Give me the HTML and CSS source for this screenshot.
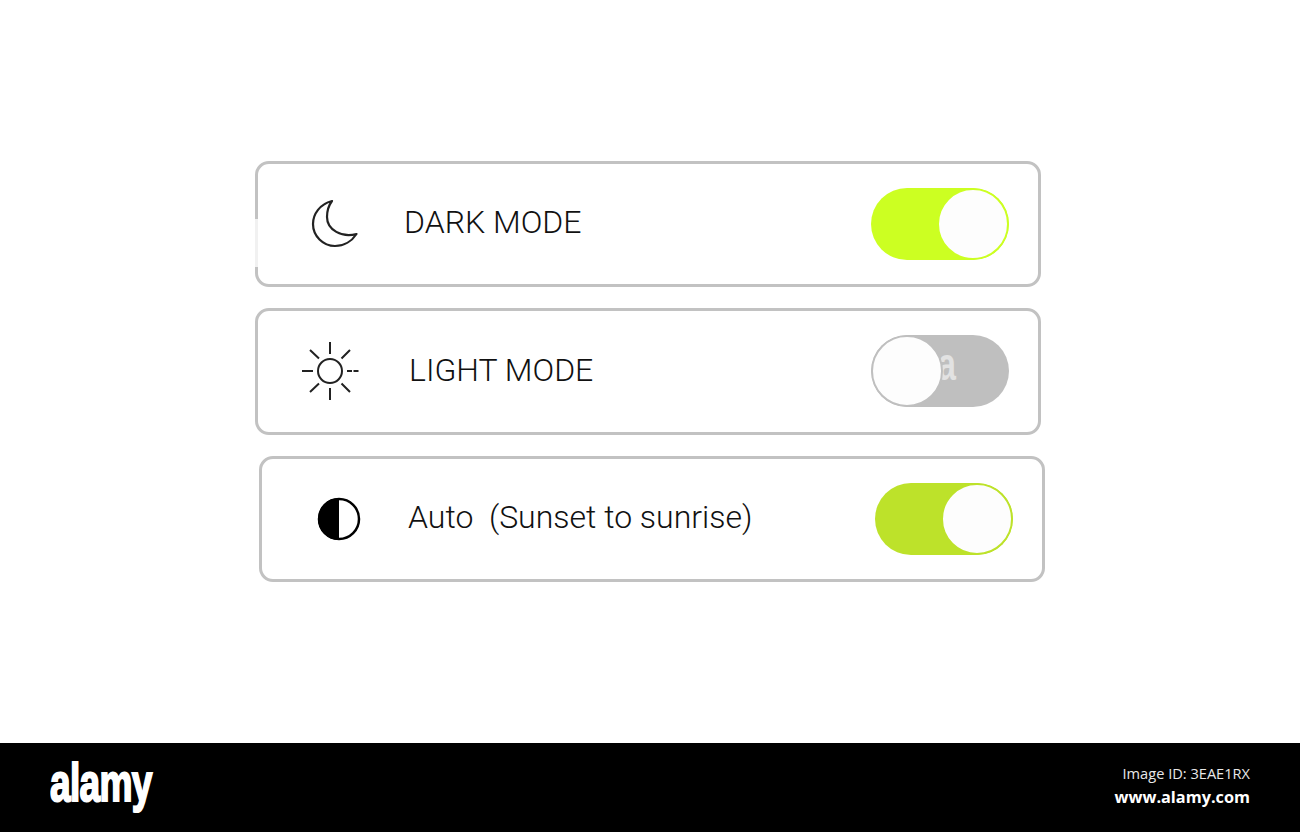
FILE: index.html
```html
<!DOCTYPE html>
<html lang="en">
    <head>
        <meta charset="utf-8">
        <title>Display mode settings</title>
        <link rel="stylesheet" href="styles.css">
    </head>
    <body>
        <div class="stage">
            <div class="card card-dark">
                <div class="icon-cell icon-moon">
                    <svg width="48" height="50" viewBox="0 0 48 50">
                        <path d="M21 2C9 5 2 15 2 25C2 37 12 47 24 47C33 47 41 42 45.5 35C31 39 16 31 16 18C16 11 18 6 21 2Z" fill="none" stroke="#222" stroke-width="2.2" stroke-linejoin="round"/>
                    </svg>
                </div>
                <span class="label">DARK MODE</span>
                <div class="toggle on"><span class="knob"></span></div>
            </div>

            <div class="card card-light">
                <div class="icon-cell icon-sun">
                    <svg width="60" height="60" viewBox="0 0 60 60">
                        <circle cx="30" cy="30" r="12" fill="none" stroke="#222" stroke-width="2"/>
                        <path d="M30 1V13M30 47V59M2 30H13M10 9L19 17.5M50 9L41.5 17.5M10 51L19 42.5M50 51L41.5 42.5" stroke="#222" stroke-width="2" fill="none"/>
                        <path d="M47 30H59" stroke="#222" stroke-width="2" stroke-dasharray="5 1.5" fill="none"/>
                    </svg>
                </div>
                <span class="label">LIGHT MODE</span>
                <div class="toggle off"><span class="mark">a</span><span class="knob"></span></div>
            </div>

            <div class="card card-auto">
                <div class="icon-cell icon-half">
                    <svg width="44" height="44" viewBox="0 0 44 44">
                        <path d="M22 1A21 21 0 0 0 22 43Z" fill="#000"/>
                        <circle cx="22" cy="22" r="20" fill="none" stroke="#000" stroke-width="2.5"/>
                    </svg>
                </div>
                <span class="label">Auto&nbsp; (Sunset to sunrise)</span>
                <div class="toggle on olive"><span class="knob"></span></div>
            </div>
        </div>

        <div class="footer">
            <span class="logo">alamy</span>
            <div class="stock">
                <div class="image-id">Image ID: 3EAE1RX</div>
                <div class="site">www.alamy.com</div>
            </div>
        </div>
    </body>
</html>
```

FILE: styles.css
```css
* {
    margin: 0;
    padding: 0;
    box-sizing: border-box;
}

body {
    width: 1300px;
    height: 832px;
    overflow: hidden;
    background: #fff;
    font-family: Roboto, "Liberation Sans", sans-serif;
    color: #111;
}

.stage {
    height: 743px;
    padding: 161px 0 0 255px;
    display: flex;
    flex-direction: column;
    gap: 21px;
}

.card {
    position: relative;
    width: 786px;
    height: 126px;
    display: flex;
    align-items: center;
    padding-right: 29px;
    border: 3px solid #c2c2c2;
    border-radius: 14px;
}

/* the scan loses part of this edge */
.card-dark::before {
    content: "";
    position: absolute;
    left: -3px;
    top: 55px;
    width: 3px;
    height: 48px;
    background: #f1f1f1;
}

.card-light {
    height: 127px;
    padding-bottom: 1px;
}

.card-auto {
    margin-left: 4px;
}

.icon-cell {
    display: flex;
    align-items: center;
    width: 146px;
}

.icon-cell svg {
    display: block;
}

.icon-moon {
    padding-left: 53px;
}

.icon-sun {
    width: 151px;
    padding-left: 42px;
}

.icon-half {
    padding-left: 55px;
}

.label {
    flex: 1;
    margin-top: -3px;
    font-size: 32px;
    font-weight: 300;
    white-space: nowrap;
}

.card-dark .label,
.card-auto .label {
    margin-top: -5px;
}

.toggle {
    position: relative;
    display: flex;
    width: 138px;
    height: 72px;
    border-radius: 36px;
    overflow: hidden;
}

.knob {
    width: 72px;
    height: 72px;
    border-radius: 50%;
    background: #fdfdfd;
    border: 2px solid;
    position: relative;
}

.on {
    justify-content: flex-end;
    background: #ccff22;
}

.on .knob {
    border-color: #ccff22;
}

.olive {
    background: #bde22a;
}

.olive .knob {
    border-color: #bde22a;
}

.off {
    background: #bfbfbf;
}

.off .knob {
    border-color: #bfbfbf;
}

.mark {
    position: absolute;
    left: 67px;
    top: 1px;
    font-family: "Liberation Sans", sans-serif;
    font-weight: 700;
    font-size: 46px;
    line-height: 56px;
    color: #e2e2e2;
    transform: scaleX(.7);
    transform-origin: left center;
}

.footer {
    height: 89px;
    background: #000;
    color: #fff;
    display: flex;
    justify-content: space-between;
    align-items: center;
    padding: 0 50px;
}

.logo {
    font-family: "Liberation Sans", sans-serif;
    font-weight: 700;
    font-size: 53px;
    line-height: 60px;
    letter-spacing: -1px;
    -webkit-text-stroke: 2px #fff;
    transform: scaleX(.7);
    transform-origin: left center;
    margin-top: -9px;
}

.stock {
    font-family: "Open Sans", sans-serif;
    text-align: right;
    margin-top: -6px;
}

.image-id {
    font-size: 14.6px;
    line-height: 24px;
    color: #e8e8e8;
}

.site {
    font-size: 16.3px;
    font-weight: 700;
    line-height: 24px;
}
```
